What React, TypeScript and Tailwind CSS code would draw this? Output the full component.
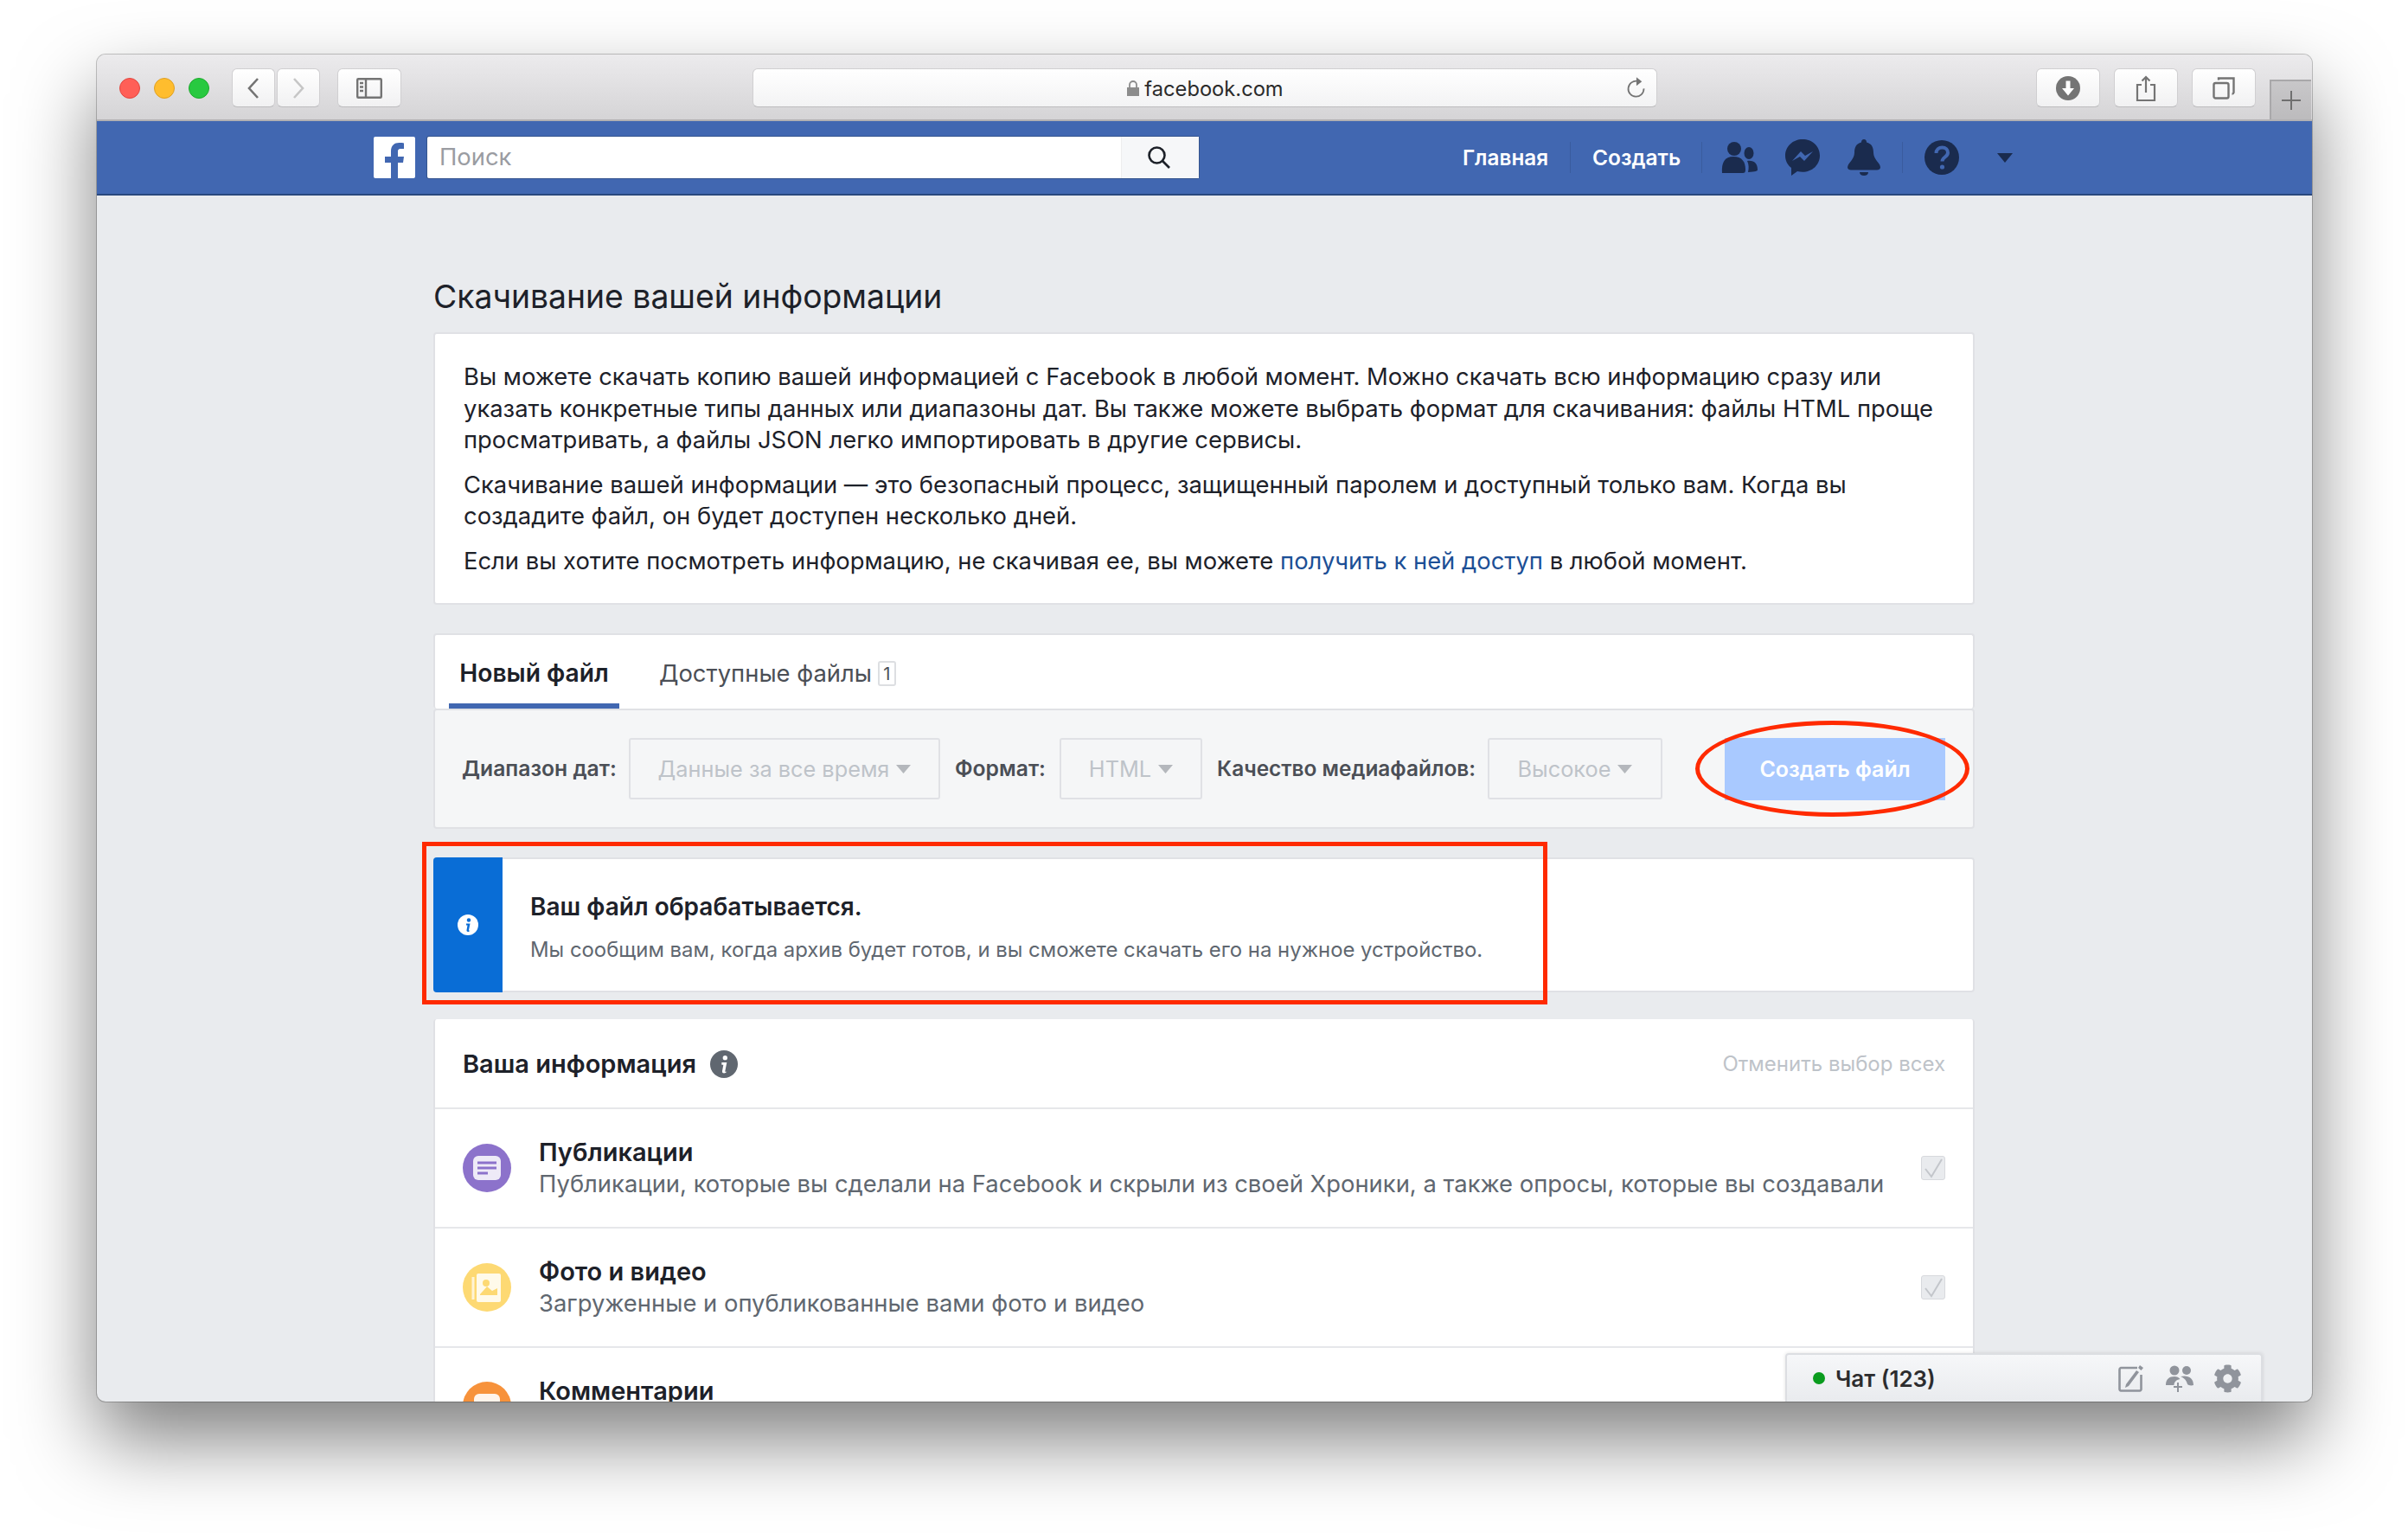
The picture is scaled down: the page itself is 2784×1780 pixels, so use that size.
import React from "react";
import { FaCog } from "react-icons/fa";

const CARD = "rounded-[4px] border-2 border-[#e0e1e5] bg-white";

function ToolbarButton({ className, children }: { className: string; children: React.ReactNode }) {
  return (
    <div className={`flex h-[45px] items-center justify-center rounded-[6px] border border-[#d0cfd1] border-b-[#bdbcbe] bg-gradient-to-b from-white to-[#f1f1f2] ${className}`}>
      {children}
    </div>
  );
}

function BrowserToolbar() {
  return (
    <div className="flex h-[77px] shrink-0 items-start border-b-2 border-[#b3b1b3] bg-gradient-to-b from-[#ecebed] to-[#d5d4d6] pt-[16px]">
      <div className="ml-[26px] mt-[11px] flex gap-[16px]">
        <span className="h-[24px] w-[24px] rounded-full border border-[#e2463f] bg-[#ff5f57]" />
        <span className="h-[24px] w-[24px] rounded-full border border-[#dfa023] bg-[#ffbd2e]" />
        <span className="h-[24px] w-[24px] rounded-full border border-[#1daa2c] bg-[#28c940]" />
      </div>
      <ToolbarButton className="ml-[26px] w-[50px]">
        <svg width="16" height="26" viewBox="0 0 16 26" fill="none" stroke="#737373" strokeWidth="2.6">
          <path d="M13 2 3 13l10 11" />
        </svg>
      </ToolbarButton>
      <ToolbarButton className="ml-[2px] w-[50px]">
        <svg width="16" height="26" viewBox="0 0 16 26" fill="none" stroke="#c6c6c6" strokeWidth="2.6">
          <path d="m3 2 10 11L3 24" />
        </svg>
      </ToolbarButton>
      <ToolbarButton className="ml-[20px] w-[74px]">
        <svg width="30" height="24" viewBox="0 0 30 24" fill="none" stroke="#747474" strokeWidth="2.4">
          <rect x="1.2" y="1.2" width="27.6" height="21.6" rx="1" />
          <path d="M11 1v22" />
          <path d="M4 6h4M4 10.5h4M4 15h4" />
        </svg>
      </ToolbarButton>
      <div className="ml-[406px] grid h-[45px] w-[1046px] grid-cols-[1fr_auto_1fr] items-center rounded-[6px] border border-[#d0cfd1] border-b-[#bdbcbe] bg-gradient-to-b from-white to-[#f3f3f4]">
        <span />
        <div className="flex items-center gap-[5px] pt-[2px] text-[23.7px] text-[#2b2b2b]">
          <svg width="16" height="20" viewBox="0 0 16 20" fill="#8c8c8c">
            <path d="M1 9h14v10H1z" />
            <path d="M4 9V6a4 4 0 0 1 8 0v3" fill="none" stroke="#8c8c8c" strokeWidth="1.8" />
          </svg>
          facebook.com
        </div>
        <div className="flex justify-end pr-[12px]">
          <svg width="23" height="27" viewBox="0 0 24 30" fill="none" stroke="#747474" strokeWidth="2">
            <path d="M14 6.5A10 10 0 1 0 22 16" />
            <path d="m12.5 1.5 7 5.5-7 5.5z" fill="#747474" stroke="none" />
          </svg>
        </div>
      </div>
      <ToolbarButton className="ml-[438px] w-[74px]">
        <svg width="28" height="28" viewBox="0 0 28 28">
          <circle cx="14" cy="14" r="14" fill="#747474" />
          <path d="M11.5 5.5h5V14H21l-7 8.5L7 14h4.500z" fill="#fff" />
        </svg>
      </ToolbarButton>
      <ToolbarButton className="ml-[16px] w-[74px]">
        <svg width="24" height="30" viewBox="0 0 24 30" fill="none" stroke="#747474" strokeWidth="2.2">
          <path d="M7 11H2v18h20V11h-5" />
          <path d="M12 20V2M7.500 6.500 12 2l4.500 4.500" />
        </svg>
      </ToolbarButton>
      <ToolbarButton className="ml-[16px] w-[74px]">
        <svg width="26" height="26" viewBox="0 0 26 26" fill="none" stroke="#747474" strokeWidth="2.4">
          <rect x="1.500" y="7" width="17" height="17.500" rx="2" />
          <path d="M7 3.500V1.500h17.500V18a2 2 0 0 1-2 1.500" />
        </svg>
      </ToolbarButton>
      <div className="ml-[16px] flex h-[46px] w-[48px] items-center justify-center self-end border-l-2 border-t-2 border-[#a9a8aa] bg-gradient-to-b from-[#c8c7c9] to-[#bcbbbd]">
        <svg width="24" height="24" viewBox="0 0 24 24" stroke="#6f6f6f" strokeWidth="2">
          <path d="M12 1v22M1 12h22" />
        </svg>
      </div>
    </div>
  );
}

function FacebookBar() {
  return (
    <div className="flex h-[86px] shrink-0 items-center border-b-2 border-[#29487d] bg-[#4167b1] pl-[320px]">
      <div className="flex h-[48px] w-[48px] items-end justify-center overflow-hidden rounded-[2px] bg-white">
        <svg width="26" height="42" viewBox="0 0 26 42" fill="#4167b1">
          <path d="M9 42V24H2v-7h7v-6C9 4 13 1 18.500 1c2.500 0 4.500.2 5.500.4V8h-3.500c-3 0-3.500 1.400-3.500 3.500V17h7l-1 7h-6v18z" />
        </svg>
      </div>
      <div className="ml-[14px] flex h-[48px] w-[892px] items-center rounded-[2px] bg-white shadow-[0_0_0_1px_#35558f]">
        <span className="flex-1 pl-[14px] text-[27.4px] text-[#9a9ca2]">Поиск</span>
        <div className="flex h-full w-[90px] items-center justify-center border-l border-[#eeeeee] bg-[#f6f7f9] pr-[4px]">
          <svg width="30" height="30" viewBox="0 0 30 30" fill="none" stroke="#1d2129" strokeWidth="2.600">
            <circle cx="12.500" cy="12.500" r="9" />
            <path d="m19 19 8 8" />
          </svg>
        </div>
      </div>
      <span className="ml-[305px] w-[98px] whitespace-nowrap text-[24.3px] font-semibold text-white">Главная</span>
      <span className="ml-[26px] h-[36px] w-px bg-[#3a5c9e]" />
      <span className="ml-[25px] w-[103px] whitespace-nowrap text-[24.5px] font-semibold text-white">Создать</span>
      <span className="ml-[23px] h-[36px] w-px bg-[#3a5c9e]" />
      <svg className="ml-[22px]" width="42" height="38" viewBox="0 0 42 38" fill="#1a2b4e">
        <circle cx="15" cy="9" r="8" />
        <path d="M1 37c-1-12 3-19 13-19s14 6 14 15c0 3-1 4-3 4z" />
        <ellipse cx="32" cy="14" rx="5.500" ry="7" />
        <path d="M30 23c8-1 12 3 12 10 0 2-2 2-11 3 1-5 1-9-1-13z" />
      </svg>
      <svg className="ml-[32px]" width="40" height="42" viewBox="0 0 40 42">
        <path d="M20 0C9 0 0 8 0 19c0 6 3 11 7 14v9l7-5c2 .5 4 .7 6 .7 11 0 20-8 20-19S31 0 20 0z" fill="#1a2b4e" />
        <path d="m8 25 10-11 5 5 9-5-10 11-5-5z" fill="#4167b1" />
      </svg>
      <svg className="ml-[32px]" width="38" height="42" viewBox="0 0 38 42" fill="#1a2b4e">
        <path d="M19 0c2 0 3 1.500 3 3.500 6 1.500 8 6 8 12 0 8 8 12 8 17 0 2-2 3-4 3H4c-2 0-4-1-4-3 0-5 8-9 8-17 0-6 2-10.500 8-12C16 1.500 17 0 19 0z" />
        <path d="M14 38h10c0 2.500-2 4-5 4s-5-1.500-5-4z" />
      </svg>
      <span className="ml-[25px] h-[36px] w-px bg-[#3a5c9e]" />
      <svg className="ml-[25px]" width="40" height="40" viewBox="0 0 40 40">
        <circle cx="20" cy="20" r="20" fill="#1a2b4e" />
        <path d="M13.500 15c0-4 3-6.500 7-6.500s6.500 2.500 6.500 6c0 5-6.500 5-6.500 10" fill="none" stroke="#4167b1" strokeWidth="4" />
        <circle cx="20.500" cy="31" r="2.600" fill="#4167b1" />
      </svg>
      <svg className="ml-[44px]" width="18" height="11" viewBox="0 0 18 11" fill="#1a2b4e">
        <path d="M0 0h18l-9 11z" />
      </svg>
    </div>
  );
}

function Caret() {
  return (
    <svg width="17" height="10" viewBox="0 0 17 10" fill="#b4b7bc">
      <path d="M0 0h17l-8.500 10z" />
    </svg>
  );
}

function Select({ label, className }: { label: string; className: string }) {
  return (
    <div className={`flex h-[71px] items-center justify-center gap-[8px] rounded-[3px] border-2 border-[#e0e1e5] text-[25.3px] text-[#bec3c9] ${className}`}>
      <span className="whitespace-nowrap">{label}</span>
      <Caret />
    </div>
  );
}

function Checkbox() {
  return (
    <div className="flex h-[28px] w-[28px] shrink-0 items-center justify-center rounded-[3px] border border-[#d7d9dd] bg-[#e9ebee]">
      <svg width="24" height="24" viewBox="0 0 24 24" fill="none" stroke="#c3c6cb" strokeWidth="2">
        <path d="m3 13 7 9L22 2" />
      </svg>
    </div>
  );
}

function InfoRow({ title, text, icon, last }: { title: string; text: string; icon: React.ReactNode; last?: boolean }) {
  return (
    <div className="flex h-[138px] shrink-0 items-center border-t-2 border-[#e6e7ea] pl-[32px] pr-[32px]">
      {icon}
      <div className={`ml-[32px] flex-1 ${last ? "self-start pt-[32px]" : ""}`}>
        <div className="text-[29px] font-semibold leading-[36px] text-[#1d2129]">{title}</div>
        {text && <div className="text-[27.4px] leading-[36px] text-[#606770]">{text}</div>}
      </div>
      {!last && <Checkbox />}
    </div>
  );
}

function Content() {
  return (
    <div className="ml-[389px] w-[1782px] shrink-0">
      <h1 className="mb-[1px] mt-[95px] text-[37.3px] font-normal leading-[44px] text-[#1d2129]">Скачивание вашей информации</h1>

      <div className={`${CARD} mt-[19px] h-[315px] px-[33px] pt-[31px] text-[27.4px] leading-[36.500px] text-[#1d2129]`}>
        <p>
          Вы можете скачать копию вашей информацией с Facebook в любой момент. Можно скачать всю информацию сразу или
          <br />
          указать конкретные типы данных или диапазоны дат. Вы также можете выбрать формат для скачивания: файлы HTML проще
          <br />
          просматривать, а файлы JSON легко импортировать в другие сервисы.
        </p>
        <p className="mt-[15px]">
          Скачивание вашей информации — это безопасный процесс, защищенный паролем и доступный только вам. Когда вы
          <br />
          создадите файл, он будет доступен несколько дней.
        </p>
        <p className="mt-[15px]">
          Если вы хотите посмотреть информацию, не скачивая ее, вы можете{" "}
          <span className="text-[#1c4f96]">получить к ней доступ</span> в любой момент.
        </p>
      </div>

      <div className={`${CARD} mt-[33px] flex h-[87px] items-end border-b-0 pl-[16px]`}>
        <div className="flex h-[79px] w-[197px] items-center justify-center border-b-[6px] border-[#4167b1] pt-[4px] text-[28.2px] font-semibold text-[#1d2129]">
          Новый файл
        </div>
        <div className="ml-[46px] flex h-[79px] items-center gap-[7px] pb-[2px] text-[27.4px] text-[#4b4f56]">
          Доступные файлы
          <span className="flex h-[29px] w-[21px] items-center justify-center rounded-[3px] border-2 border-[#dddfe2] text-[20px] leading-none">1</span>
        </div>
      </div>

      <div className="flex h-[139px] items-start rounded-[4px] border-2 border-[#e0e1e5] bg-[#f5f6f7] pl-[31px] pt-[32px]">
        <span className="mt-[17px] w-[193px] whitespace-nowrap text-[24.7px] font-semibold text-[#4b4f56]">Диапазон дат:</span>
        <Select label="Данные за все время" className="w-[360px]" />
        <span className="ml-[17px] mt-[17px] w-[121px] whitespace-nowrap text-[24.7px] font-semibold text-[#4b4f56]">Формат:</span>
        <Select label="HTML" className="w-[165px]" />
        <span className="ml-[17px] mt-[17px] w-[313px] whitespace-nowrap text-[24.4px] font-semibold text-[#4b4f56]">Качество медиафайлов:</span>
        <Select label="Высокое" className="w-[202px]" />
        <button className="ml-[72px] h-[72px] w-[255px] bg-[#a9c9ff] pt-[1px] text-[25px] font-semibold text-white">Создать файл</button>
      </div>

      <div className={`${CARD} mt-[33px] flex h-[156px] items-stretch`}>
        <div className="-my-[2px] -ml-[2px] flex w-[80px] items-center justify-center rounded-l-[4px] bg-[#096dd6]">
          <svg width="24" height="24" viewBox="0 0 24 24">
            <circle cx="12" cy="12" r="12" fill="#fff" />
            <circle cx="13" cy="6.500" r="2.200" fill="#096dd6" />
            <path d="M10 10.500h4.500l-1.500 7.500c-.1.800.6.900 1.500.4-.9 1.800-4.300 2.300-4-.4l1-5.500H10z" fill="#096dd6" />
          </svg>
        </div>
        <div className="ml-[32px] flex flex-col pt-[37px]">
          <div className="text-[28px] font-semibold leading-[36px] text-[#1d2129]">Ваш файл обрабатывается.</div>
          <div className="mt-[14px] text-[23.9px] leading-[36px] text-[#606770]">
            Мы сообщим вам, когда архив будет готов, и вы сможете скачать его на нужное устройство.
          </div>
        </div>
      </div>

      <div className="mt-[31px] flex flex-col rounded-t-[4px] border-x-2 border-[#e0e1e5] bg-white">
        <div className="flex h-[102px] items-center justify-between pl-[32px] pr-[32px] pt-[2px]">
          <div className="flex items-center gap-[16px]">
            <span className="text-[29px] font-semibold text-[#1d2129]">Ваша информация</span>
            <svg width="32" height="32" viewBox="0 0 24 24">
              <circle cx="12" cy="12" r="12" fill="#606770" />
              <circle cx="13" cy="6.500" r="2" fill="#fff" />
              <path d="M10 10.500h4.500l-1.500 7.500c-.1.800.6.900 1.500.4-.9 1.800-4.300 2.300-4-.4l1-5.500H10z" fill="#fff" />
            </svg>
          </div>
          <span className="text-[24px] text-[#bec3c9]">Отменить выбор всех</span>
        </div>
        <InfoRow
          title="Публикации"
          text="Публикации, которые вы сделали на Facebook и скрыли из своей Хроники, а также опросы, которые вы создавали"
          icon={
            <svg className="shrink-0" width="56" height="56" viewBox="0 0 56 56">
              <circle cx="28" cy="28" r="28" fill="#8c72cb" />
              <rect x="12" y="14" width="32" height="28" rx="6" fill="#fff" fillOpacity="0.85" />
              <path d="M17 22h22M17 28h22M17 34h12" stroke="#8c72cb" strokeWidth="3" />
            </svg>
          }
        />
        <InfoRow
          title="Фото и видео"
          text="Загруженные и опубликованные вами фото и видео"
          icon={
            <svg className="shrink-0" width="56" height="56" viewBox="0 0 56 56">
              <circle cx="28" cy="28" r="28" fill="#fdd973" />
              <rect x="16" y="12" width="28" height="33" rx="2" fill="#fff" fillOpacity="0.85" />
              <path d="M12 16v26" stroke="#fff" strokeOpacity="0.7" strokeWidth="3" />
              <circle cx="27" cy="23" r="4" fill="#fdd973" />
              <path d="m20 36 8-9 6 5 6-3v8H20z" fill="#fdd973" />
            </svg>
          }
        />
        <InfoRow
          last
          title="Комментарии"
          text=""
          icon={
            <svg className="mt-[39px] shrink-0 self-start" width="56" height="56" viewBox="0 0 56 56">
              <circle cx="28" cy="28" r="28" fill="#f7923b" />
              <rect x="13" y="14" width="30" height="24" rx="6" fill="#fff" fillOpacity="0.9" />
            </svg>
          }
        />
      </div>
    </div>
  );
}

function ChatDock() {
  return (
    <div className="absolute bottom-0 right-[57px] flex h-[56px] w-[552px] items-center rounded-t-[4px] border-x-2 border-t-2 border-[#dcdee2] bg-gradient-to-b from-[#f6f7f9] to-[#e9ebee] pl-[30px] pr-[22px] shadow-[0_0_4px_rgba(0,0,0,0.12)]">
      <span className="h-[14px] w-[14px] rounded-full bg-[#0a9c1e]" />
      <span className="ml-[12px] flex-1 text-[26px] font-semibold text-[#2c2c2e]">Чат (123)</span>
      <svg width="32" height="32" viewBox="0 0 32 32" fill="none" stroke="#90949c" strokeWidth="2.600">
        <path d="M22 4H3a2 2 0 0 0-1.500 2v23a2 2 0 0 0 1.500 1.500h22a2 2 0 0 0 1.500-1.500V12" />
        <path d="M9 23 21 7l3 2-12 16-4 2z" fill="#90949c" stroke="none" />
        <path d="m25 1 4 3-2.500 3-3.500-3z" fill="#90949c" stroke="none" />
      </svg>
      <svg className="ml-[22px]" width="34" height="32" viewBox="0 0 34 32" fill="#90949c">
        <circle cx="11" cy="7" r="5.500" />
        <circle cx="25" cy="7" r="5" />
        <path d="M1 24c0-7 4-10 10-10 3 0 5 1 6.500 3-5 1-7 4-7 7z" />
        <path d="M18 14c9-2 15 2 15 10-3 1-6 0-7-1-1-4-3-7-8-9z" />
        <path d="M15 21v11M10 26h10" stroke="#90949c" strokeWidth="2" />
      </svg>
      <FaCog className="ml-[22px] text-[#90949c]" size={33} />
    </div>
  );
}

export default function App() {
  return (
    <div className="h-[1780px] w-[2784px] overflow-hidden bg-white pl-[112px] pt-[63px] text-[#1d2129] [font-family:Inter,'Noto_Sans',sans-serif]">
      <div className="relative flex h-[1557px] w-[2561px] flex-col overflow-hidden rounded-[10px] bg-[#e9ebee] shadow-[0_0_0_1px_rgba(0,0,0,0.22),0_44px_90px_rgba(0,0,0,0.5)]">
        <BrowserToolbar />
        <FacebookBar />
        <div className="flex min-h-0 flex-1 overflow-hidden">
          <Content />
        </div>
        <ChatDock />
        {/* Annotation marks drawn on top of the page */}
        <div className="absolute left-[376px] top-[910px] h-[188px] w-[1301px] border-[5px] border-[#ff2a00]" />
        <div className="absolute left-[1848px] top-[770px] h-[111px] w-[317px] rounded-[50%] border-[5px] border-[#ff2a00]" />
      </div>
    </div>
  );
}
